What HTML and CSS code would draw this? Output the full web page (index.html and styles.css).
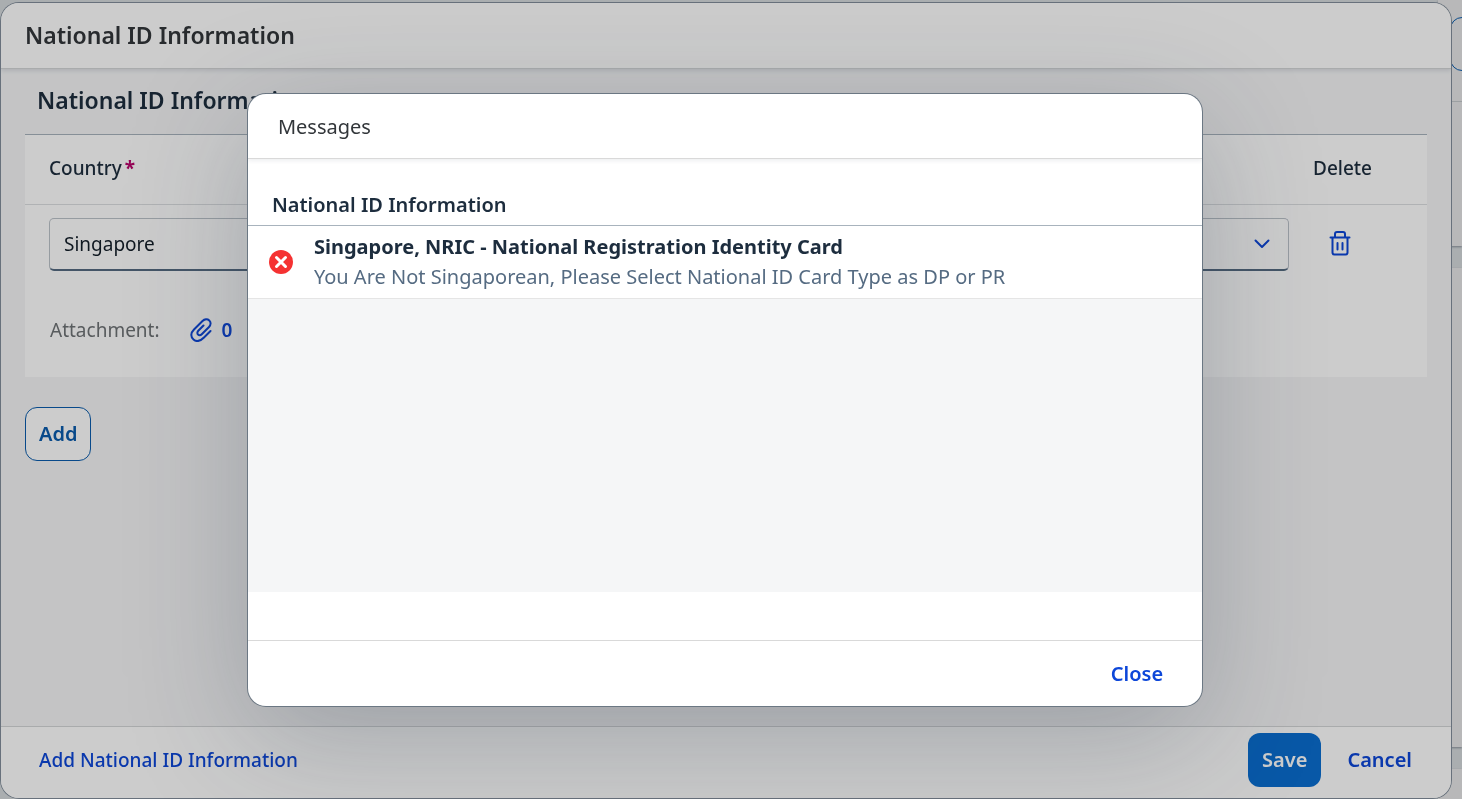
FILE: index.html
```html
<!DOCTYPE html>
<html lang="en">
<head>
  <meta charset="UTF-8"/>
  <meta name="viewport" content="width=device-width, initial-scale=1.0"/>
  <title>National ID Information</title>
  <link rel="stylesheet" href="styles.css">
</head>
<body>

  <!-- Page behind the dialogs -->
  <div class="page">
    <div class="page-rail"></div>
    <div class="page-panels">
      <div class="panel panel-top">
        <div class="panel-bar"><span class="panel-pill"></span></div>
      </div>
      <div class="panel panel-main"></div>
      <div class="panel panel-end"></div>
    </div>
  </div>

  <!-- Edit dialog -->
  <div class="layer">
    <div class="dialog" role="dialog" aria-labelledby="dialog-title">
      <header class="dialog-header">
        <h1 id="dialog-title">National ID Information</h1>
      </header>

      <main class="dialog-body">
        <h2>National ID Information</h2>
        <table class="id-table">
          <thead>
            <tr>
              <th class="col-country"><label for="country">Country<span class="required">*</span></label></th>
              <th class="col-type"></th>
              <th class="col-delete">Delete</th>
            </tr>
          </thead>
          <tbody>
            <tr class="row-fields">
              <td class="col-country">
                <select id="country" class="field">
                  <option>Singapore</option>
                </select>
              </td>
              <td class="col-type">
                <div class="select-wrap">
                  <select class="field" aria-label="Primary">
                    <option></option>
                  </select>
                  <svg class="chevron" viewBox="0 0 16 10" width="16" height="10"><path d="M1.500 1.500 8 8l6.500-6.500"/></svg>
                </div>
              </td>
              <td class="col-delete">
                <button class="icon-button" aria-label="Delete">
                  <svg viewBox="0 0 22 26" width="22" height="26">
                    <path d="M1.500 7.500h19M6 7V4a2 2 0 0 1 2-2h6a2 2 0 0 1 2 2v3M3.500 8v14.500a2 2 0 0 0 2 2h11a2 2 0 0 0 2-2V8M8.500 13v6.500M13.500 13v6.500"/>
                  </svg>
                </button>
              </td>
            </tr>
            <tr class="row-attachment">
              <td colspan="3">
                <div class="attachment">
                  <span class="attachment-label">Attachment:</span>
                  <button class="attachment-button">
                    <svg viewBox="0 0 22 24" width="22" height="24">
                      <path d="M20.500 13l-6.500 6.500c-3.500 3.500-7.500 4.500-10.500 2s-3-6.500.5-10L12.500 3c2-2 5-2.200 6.800-.6s1.700 4.600-.3 6.600l-7 7c-1.300 1.300-3 1.500-4 .6s-.8-2.800.5-4.100l5-5"/>
                    </svg>
                    0
                  </button>
                </div>
              </td>
            </tr>
          </tbody>
        </table>
        <button class="button button-outline">Add</button>
      </main>

      <footer class="dialog-footer">
        <button class="button button-link">Add National ID Information</button>
        <span class="spacer"></span>
        <button class="button button-primary">Save</button>
        <button class="button">Cancel</button>
      </footer>
    </div>
  </div>

  <!-- Messages dialog -->
  <div class="layer layer-modal">
    <div class="messages" role="alertdialog" aria-labelledby="messages-title">
      <header class="messages-header">
        <h2 id="messages-title">Messages</h2>
      </header>
      <div class="messages-content">
        <h3>National ID Information</h3>
        <div class="message">
          <svg class="message-icon" viewBox="0 0 24 24" width="24" height="24">
            <circle cx="12" cy="12" r="12"/>
            <path d="M7.500 7.500l9 9M16.500 7.500l-9 9"/>
          </svg>
          <div class="message-text">
            <strong>Singapore, NRIC - National Registration Identity Card</strong>
            <p>You Are Not Singaporean, Please Select National ID Card Type as DP or PR</p>
          </div>
        </div>
        <div class="messages-empty"></div>
      </div>
      <footer class="messages-footer">
        <button class="button">Close</button>
      </footer>
    </div>
  </div>

</body>
</html>
```
FILE: styles.css
```css
* {
  box-sizing: border-box;
}
body {
  margin: 0;
  height: 100vh;
  overflow: hidden;
  font-family: "Noto Sans", sans-serif;
  font-size: 20px;
  line-height: 28px;
  color: #1d2d3e;
  background: #d5dadd;
}
h1, h2, h3, p {
  margin: 0;
}
button, select {
  font: inherit;
}

/* Page behind */
.page {
  display: flex;
  justify-content: space-between;
  height: 100vh;
}
.page-rail {
  width: 1px;
  height: 196px;
  margin-top: 102px;
  background: #10202e;
}
.page-panels {
  display: flex;
  flex-direction: column;
  gap: 22px;
  width: 24px;
}
.panel {
  background: #e6e7e8;
  box-shadow: 0 1px 2px #8a929a;
}
.panel-top {
  height: 246px;
}
.panel-bar {
  height: 102px;
  padding-top: 17px;
  border-bottom: 1px solid #c4c8cb;
}
.panel-pill {
  display: block;
  width: 54px;
  height: 54px;
  margin-left: 12px;
  border: 1px solid #0a5cad;
  border-radius: 12px;
}
.panel-main {
  flex: 1;
}
.panel-end {
  height: 30px;
}

/* Dialog layers */
.layer {
  position: fixed;
  inset: 0;
  display: flex;
  padding: 3px 11px 1px 1px;
}
.layer-modal {
  align-items: center;
  justify-content: center;
  padding: 2px 13px 1px 1px;
  background: rgba(0, 0, 0, 0.2);
}
.dialog {
  flex: 1;
  display: flex;
  flex-direction: column;
  overflow: hidden;
  border-radius: 18px;
  background: #f5f6f7;
  box-shadow: 0 0 0 1px #828e9b;
}
.dialog-header {
  padding: 18px 24px;
  border-bottom: 1px solid #d4d6d8;
  background: #fff;
  box-shadow: 0 2px 4px rgba(34, 53, 72, 0.12);
}
.dialog-header h1 {
  font-size: 23px;
  line-height: 29px;
  font-weight: 600;
  color: #32363a;
}
.dialog-body {
  flex: 1;
  padding: 15px 24px;
}
.dialog-body h2 {
  padding: 0 12px 17px;
  font-size: 23px;
  line-height: 33px;
  font-weight: 600;
}
.dialog-footer {
  display: flex;
  align-items: center;
  padding: 6px 25px 11px 24px;
  border-top: 1px solid #d4d6d8;
  background: #fff;
}
.spacer {
  flex: 1;
}

/* National ID table */
.id-table {
  width: 100%;
  margin-bottom: 30px;
  border-collapse: collapse;
  table-layout: fixed;
  border-top: 1px solid #a8b3bd;
  background: #fff;
  font-size: 19px;
}
.id-table th {
  height: 70px;
  padding: 0 0 3px;
  border-bottom: 1px solid #dcdfe2;
  font-weight: 500;
  text-align: left;
}
.id-table td {
  padding: 0;
}
.id-table .col-country {
  width: 50%;
  padding-left: 24px;
}
.id-table .col-delete {
  width: 138px;
  padding-left: 24px;
}
.row-fields td {
  height: 79px;
}
.row-attachment td {
  height: 93px;
}
.required {
  margin-left: 3px;
  color: #ba066c;
  font-weight: 700;
}
.field {
  display: block;
  width: 100%;
  height: 53px;
  padding: 0 14px;
  appearance: none;
  border: 1px solid #bcc3ca;
  border-bottom: 2px solid #556b81;
  border-radius: 5px;
  background: #fff;
  color: #131e29;
}
.select-wrap {
  display: flex;
  align-items: center;
}
.chevron {
  flex: none;
  margin-left: -35px;
  margin-right: 19px;
  fill: none;
  stroke: #0d47d9;
  stroke-width: 2;
  stroke-linecap: round;
  stroke-linejoin: round;
  pointer-events: none;
}
.icon-button {
  display: flex;
  padding: 12px 16px 14px;
  border: none;
  background: none;
}
.icon-button svg,
.attachment svg {
  fill: none;
  stroke: #0d47d9;
  stroke-width: 2;
  stroke-linecap: round;
  stroke-linejoin: round;
}
.attachment {
  display: flex;
  align-items: center;
  gap: 30px;
  padding-left: 25px;
}
.attachment-label {
  color: #6f7376;
}
.attachment-button {
  display: flex;
  align-items: center;
  gap: 10px;
  padding: 0;
  border: none;
  background: none;
  color: #0d47d9;
  font-weight: 600;
}

/* Buttons */
.button {
  height: 54px;
  padding: 0 13px;
  border: 1px solid transparent;
  border-radius: 12px;
  background: none;
  color: #0d47d9;
  font-weight: 600;
  cursor: pointer;
}
.button-outline {
  border-color: #0a5cad;
  background: #fff;
  color: #0a5cad;
}
.button-primary {
  margin-right: 12px;
  background: #0a6ed1;
  color: #fff;
}
.button-link {
  font-size: 19px;
  font-weight: 500;
}

/* Messages dialog */
.messages {
  display: flex;
  flex-direction: column;
  width: 65.9%;
  height: 76.8%;
  overflow: hidden;
  border-radius: 18px;
  background: #fff;
  box-shadow: 0 0 0 1px #6b7783, 0 30px 120px rgba(34, 53, 72, 0.25);
}
.messages-header {
  padding: 19px 30px 17px;
  border-bottom: 1px solid #d9d9d9;
  box-shadow: 0 2px 4px rgba(34, 53, 72, 0.08);
}
.messages-header h2 {
  font-size: 20px;
  font-weight: 400;
  color: #32363a;
}
.messages-content {
  flex: 1;
  display: flex;
  flex-direction: column;
  padding: 24px 0 48px;
}
.messages-content h3 {
  padding: 8px 24px 6px;
  border-bottom: 1px solid #a8b3bd;
  font-size: 20px;
  font-weight: 600;
}
.message {
  display: flex;
  align-items: center;
  gap: 21px;
  padding: 6px 21px;
  border-bottom: 1px solid #e5e5e5;
}
.message-icon {
  flex: none;
  fill: #f53232;
}
.message-icon path {
  stroke: #fff;
  stroke-width: 3;
  stroke-linecap: round;
}
.message-text {
  line-height: 30px;
}
.message-text strong {
  font-weight: 700;
}
.message-text p {
  color: #556b82;
}
.messages-empty {
  flex: 1;
  background: #f5f6f7;
}
.messages-footer {
  display: flex;
  justify-content: flex-end;
  padding: 6px 25px 5px;
  border-top: 1px solid #d9d9d9;
}
```
